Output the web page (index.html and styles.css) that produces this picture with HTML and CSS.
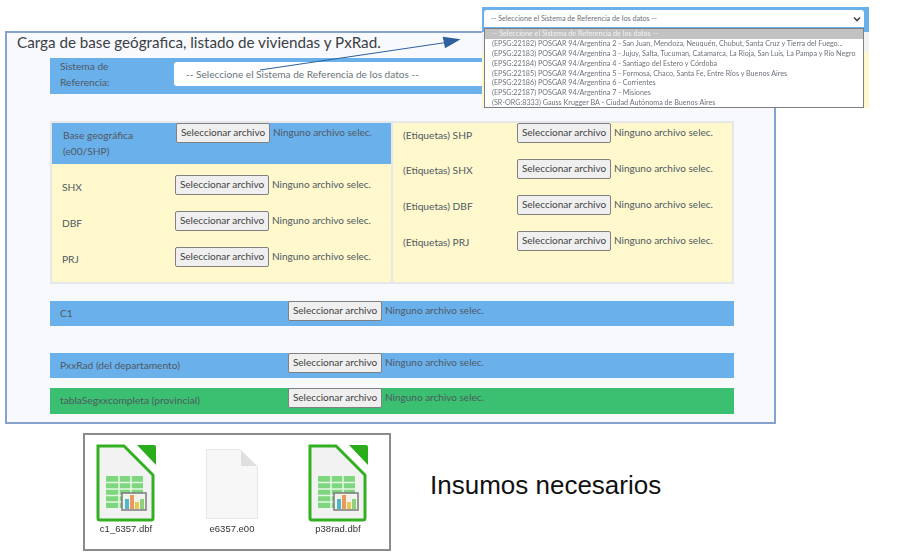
FILE: index.html
```html
<!DOCTYPE html>
<html lang="es">
<head>
<meta charset="utf-8">
<title>Carga de base geográfica</title>
<link rel="stylesheet" href="styles.css">
</head>
<body>
<svg width="0" height="0" class="defs">
  <symbol id="calc" viewBox="0 0 60 78">
    <path d="M2 2H28L57 31V74a2 2 0 0 1-2 2H4a2 2 0 0 1-2-2Z" fill="#f2f2f2" stroke="#33b022" stroke-width="3"/>
    <path d="M41 1H58a2 2 0 0 1 2 2V21Z" fill="#2aad1a"/>
    <rect x="10" y="32" width="37" height="32" rx="1" fill="#7ed67f"/>
    <path d="M10 38.5H47M10 45H47M10 51.5H47M10 58H47M23 32V64M35 32V64" stroke="#e4f7e4" stroke-width="1.6"/>
    <rect x="26" y="49" width="24" height="17" fill="#f2f2ee" stroke="#7b7b7b" stroke-width="1.5"/>
    <rect x="29" y="55" width="4" height="10" fill="#52b5c9"/>
    <rect x="34" y="51" width="4" height="14" fill="#e89a5c"/>
    <rect x="39" y="58" width="4" height="7" fill="#e8c850"/>
    <rect x="44" y="55" width="4" height="10" fill="#8fd07a"/>
  </symbol>
</svg>

<main class="panel">
  <h1 class="title">Carga de base geógrafica, listado de viviendas y PxRad.</h1>
  <div class="content">
    <div class="ref-row">
      <label class="ref-label">Sistema de Referencia:</label>
      <div class="fake-select">-- Seleccione el Sistema de Referencia de los datos --</div>
    </div>

    <div class="columns">
      <div class="col col-left">
        <div class="field field-base">
          <span class="field-label base-label">Base geográfica (e00/SHP)</span>
          <span class="file"><span class="file-btn">Seleccionar archivo</span><span class="file-name">Ninguno archivo selec.</span></span>
        </div>
        <div class="field"><span class="field-label">SHX</span><span class="file"><span class="file-btn">Seleccionar archivo</span><span class="file-name">Ninguno archivo selec.</span></span></div>
        <div class="field"><span class="field-label">DBF</span><span class="file"><span class="file-btn">Seleccionar archivo</span><span class="file-name">Ninguno archivo selec.</span></span></div>
        <div class="field"><span class="field-label">PRJ</span><span class="file"><span class="file-btn">Seleccionar archivo</span><span class="file-name">Ninguno archivo selec.</span></span></div>
      </div>
      <div class="col col-right">
        <div class="field"><span class="field-label">(Etiquetas) SHP</span><span class="file"><span class="file-btn">Seleccionar archivo</span><span class="file-name">Ninguno archivo selec.</span></span></div>
        <div class="field"><span class="field-label">(Etiquetas) SHX</span><span class="file"><span class="file-btn">Seleccionar archivo</span><span class="file-name">Ninguno archivo selec.</span></span></div>
        <div class="field"><span class="field-label">(Etiquetas) DBF</span><span class="file"><span class="file-btn">Seleccionar archivo</span><span class="file-name">Ninguno archivo selec.</span></span></div>
        <div class="field"><span class="field-label">(Etiquetas) PRJ</span><span class="file"><span class="file-btn">Seleccionar archivo</span><span class="file-name">Ninguno archivo selec.</span></span></div>
      </div>
    </div>

    <div class="bar bar-c1"><span class="bar-label">C1</span><span class="file"><span class="file-btn">Seleccionar archivo</span><span class="file-name">Ninguno archivo selec.</span></span></div>
    <div class="bar bar-px"><span class="bar-label">PxxRad (del departamento)</span><span class="file"><span class="file-btn">Seleccionar archivo</span><span class="file-name">Ninguno archivo selec.</span></span></div>
    <div class="bar bar-green"><span class="bar-label">tablaSegxxcompleta (provincial)</span><span class="file"><span class="file-btn">Seleccionar archivo</span><span class="file-name">Ninguno archivo selec.</span></span></div>
  </div>
</main>

<section class="inputs">
  <div class="files-box">
    <figure class="file-item">
      <svg class="file-icon" viewBox="0 0 60 78"><use href="#calc"/></svg>
      <figcaption>c1_6357.dbf</figcaption>
    </figure>
    <figure class="file-item file-item-blank">
      <svg class="file-icon blank" viewBox="0 0 52 70">
        <path d="M0.5 0.5H33L51.5 18V69.5H0.5Z" fill="#f7f7f7" stroke="#e6e6e6"/>
        <path d="M35 1V17H51Z" fill="#dfdfdf"/>
      </svg>
      <figcaption>e6357.e00</figcaption>
    </figure>
    <figure class="file-item">
      <svg class="file-icon" viewBox="0 0 60 78"><use href="#calc"/></svg>
      <figcaption>p38rad.dbf</figcaption>
    </figure>
  </div>
  <p class="inputs-text">Insumos necesarios</p>
</section>

<div class="popup">
  <div class="popup-select">
    <span>-- Seleccione el Sistema de Referencia de los datos --</span>
    <svg class="chev" width="8" height="6" viewBox="0 0 8 6"><path d="M1 1.5L4 4.5L7 1.5" fill="none" stroke="#444" stroke-width="1.6"/></svg>
  </div>
  <ul class="popup-list">
    <li class="selected">-- Seleccione el Sistema de Referencia de los datos --</li>
    <li>(EPSG:22182) POSGAR 94/Argentina 2 - San Juan, Mendoza, Neuquén, Chubut, Santa Cruz y Tierra del Fuego...</li>
    <li>(EPSG:22183) POSGAR 94/Argentina 3 - Jujuy, Salta, Tucuman, Catamarca, La Rioja, San Luis, La Pampa y Río Negro</li>
    <li>(EPSG:22184) POSGAR 94/Argentina 4 - Santiago del Estero y Córdoba</li>
    <li>(EPSG:22185) POSGAR 94/Argentina 5 - Formosa, Chaco, Santa Fe, Entre Ríos y Buenos Aires</li>
    <li>(EPSG:22186) POSGAR 94/Argentina 6 - Corrientes</li>
    <li>(EPSG:22187) POSGAR 94/Argentina 7 - Misiones</li>
    <li>(SR-ORG:8333) Gauss Krugger BA - Ciudad Autónoma de Buenos Aires</li>
  </ul>
</div>

<svg class="arrow" width="206" height="40" viewBox="0 0 206 40">
  <path d="M2 36L188 8.5" stroke="#2f5f9e" stroke-width="1" fill="none"/>
  <path d="M202.7 5.3L184.7 2.7L187 14.3Z" fill="#2f5f9e"/>
</svg>
</body>
</html>
```
FILE: styles.css
```css
* { box-sizing: border-box; }
html, body { margin: 0; padding: 0; }
body {
  position: relative;
  width: 911px;
  height: 557px;
  overflow: hidden;
  background: #fff;
  font-family: Lato, "Noto Sans", sans-serif;
  font-size: 10.2px;
  color: #4f5964;
  padding: 31px 0 0 5px;
}
.defs { position: absolute; }

.panel {
  width: 771px;
  height: 393px;
  border: 2px solid #86a3cf;
  background: #f8f9fc;
  padding: 0 40px 0 10px;
}
.title {
  margin: 0;
  font-weight: 400;
  font-size: 15.2px;
  line-height: 18px;
  height: 25px;
  color: #3a4046;
}
.content { margin-left: 33px; }

.ref-row {
  display: flex;
  height: 36px;
  background: #6ab0eb;
  align-items: flex-start;
}
.ref-label {
  width: 124px;
  padding: 0 40px 0 10px;
  line-height: 16px;
}
.fake-select {
  flex: 1;
  height: 24px;
  margin-top: 4px;
  background: #fff;
  border-radius: 3px;
  padding: 0 12px;
  line-height: 24px;
  font-size: 10.1px;
  color: #6b737a;
}

.columns {
  display: grid;
  grid-template-columns: 339px 1fr;
  gap: 2px;
  margin-top: 27px;
  height: 163px;
  padding: 2px;
  background: #e5e7ea;
}
.col { background: #fef8cc; }

.field {
  display: flex;
  height: 36px;
  padding-left: 10px;
}
.field-label { line-height: 16px; }
.col-left .field .field-label { width: 113px; padding-top: 15px; }
.col-left .field .file { padding-top: 11px; }
.col-left .field-base {
  height: 41px;
  background: #6ab0eb;
}
.col-left .field-base .base-label { width: 114px; padding: 4px 30px 0 1px; }
.col-left .field-base .file { padding-top: 0; }
.col-right .field .field-label { width: 114px; padding-top: 3px; }
.col-right .field:first-child .field-label { padding-top: 4px; }

.file { display: flex; align-items: flex-start; }
.file-btn {
  display: block;
  width: 94px;
  height: 20px;
  background: #efefef;
  border: 1px solid #808080;
  border-radius: 2px;
  color: #3f3f3f;
  text-align: center;
  line-height: 17px;
  font-size: 10px;
  white-space: nowrap;
}
.file-name { margin-left: 3px; line-height: 18px; font-size: 10px; white-space: nowrap; }

.bar {
  display: flex;
  background: #6ab0eb;
  height: 25px;
}
.bar-label { width: 238px; padding: 4px 0 0 10px; line-height: 16px; }
.bar-c1 { margin-top: 17px; }
.bar-px { margin-top: 27px; }
.bar-green { margin-top: 10px; background: #3ac070; height: 26px; }

.inputs {
  display: flex;
  align-items: center;
  margin: 9px 0 0 78px;
}
.files-box {
  width: 308px;
  height: 118px;
  border: 2px solid #8b8b8b;
  background: #fff;
  display: flex;
  padding: 9px 0 0 11px;
}
.file-item {
  margin: 0 50px 0 0;
  width: 60px;
  text-align: center;
  font-size: 9.5px;
  color: #333;
  filter: blur(0.4px);
}
.file-item-blank { width: 52px; padding-top: 5px; }
.file-icon { display: block; width: 60px; height: 78px; }
.file-icon.blank { width: 52px; height: 70px; }
.file-item figcaption {
  margin-top: 1px;
  font-family: "Liberation Sans", sans-serif;
  white-space: nowrap;
  display: flex;
  justify-content: center;
}
.file-item-blank figcaption { margin-top: 4px; }
.inputs-text {
  margin: 0 0 14px 39px;
  font-family: "Liberation Sans", Arial, sans-serif;
  font-size: 26px;
  color: #111;
}

.popup {
  position: absolute;
  left: 482px;
  top: 7px;
  width: 387px;
  height: 101px;
  background: linear-gradient(#6ab0eb 0 25px, #f1f2f3 25px 45px, #fef8cc 45px);
  font-size: 7.2px;
  color: #6d737a;
}
.popup-select {
  height: 21px;
  padding: 3px 0 0 2px;
  position: relative;
}
.popup-select span {
  display: flex;
  align-items: center;
  width: 380px;
  height: 17px;
  background: #fff;
  border-radius: 3px 3px 0 0;
  padding: 0 7px;
}
.chev { position: absolute; right: 8px; top: 9px; }
.popup-list {
  list-style: none;
  margin: 0 0 0 2px;
  padding: 0;
  width: 380px;
  height: 80px;
  background: #fff;
  border: 1px solid #7f7f7f;
}
.popup-list li {
  height: 9.9px;
  line-height: 9.9px;
  padding-left: 7px;
  white-space: nowrap;
  overflow: hidden;
  filter: blur(0.25px);
}
.popup-list .selected { background: #c2c2c2; color: #f3f3f3; }

.arrow {
  position: absolute;
  left: 258px;
  top: 34px;
}
```
